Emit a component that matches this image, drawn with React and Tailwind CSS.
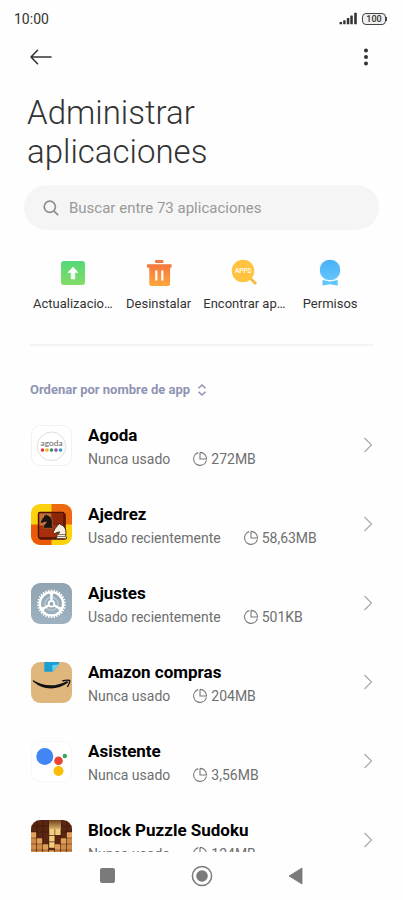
function AgodaIcon() {
  const dots = ['#e4394a', '#f2b134', '#2f9e54', '#9b4fb5', '#2f9fd8']
  return (
    <svg viewBox="0 0 41 41" className="size-full">
      <rect x="0.5" y="0.5" width="40" height="40" rx="8.5" fill="#fff" stroke="#f1f1f1" />
      <circle cx="20.5" cy="21.3" r="14.3" fill="#fff" stroke="#d6d6d6" strokeWidth="0.8" />
      <text x="20.6" y="20.8" textAnchor="middle" fontSize="8.4" fill="#666" fontFamily="Lato, sans-serif">agoda</text>
      {dots.map((color, i) => (
        <circle key={color} cx={11.5 + i * 4.5} cy="25.1" r="1.8" fill={color} />
      ))}
    </svg>
  )
}

const knightPath = 'M3 16h10.500v-1.800l-1-.8c1.200-5.500-.3-10.600-5.300-11.800L6.300 0l-.9 1.900L3.800 1l.2 2.200C2.200 4.500 1.200 6.700.2 8.800c-.3.9.3 1.700 1 1.900.9.2 1.300-.6 2.200-.9 1-.3 2.100-.2 3-.8-.2 2-2.900 2.800-3.100 5.200z'

function ChessIcon() {
  return (
    <svg viewBox="0 0 41 41" className="size-full">
      <defs>
        <clipPath id="chess-clip"><rect width="41" height="41" rx="9" /></clipPath>
      </defs>
      <g clipPath="url(#chess-clip)">
        <rect width="41" height="41" fill="#fbd30c" />
        <rect x="20.5" width="20.5" height="20.5" fill="#ee6a12" />
        <rect y="20.5" width="20.5" height="20.5" fill="#ea5a0b" />
        <rect x="8" y="9" width="27" height="27" rx="2" fill="#501205" opacity="0.75" />
        <rect x="7.5" y="8.5" width="25.5" height="25.5" rx="1.5" fill="#a92f0b" stroke="#4a1205" strokeWidth="1.4" />
        <path d="M8.5 9.5h12v12h-12z" fill="#c9702f" />
        <path d="M20.5 9.5H32v12H20.5z" fill="#8d2608" />
        <path d={knightPath} transform="translate(9.500 9.500) scale(0.920)" fill="#1f130e" stroke="#e0b088" strokeWidth="0.4" />
        <path d={knightPath} transform="translate(22.300 19) scale(0.980)" fill="#f5efe2" stroke="#2e150c" strokeWidth="0.8" />
        <path d="M25.500 32.500h9.500M26.500 30.500h8" stroke="#5b4a40" strokeWidth="0.7" />
      </g>
    </svg>
  )
}

function SettingsIcon() {
  const teeth = Array.from({ length: 30 }, (_, i) => i * 12)
  return (
    <svg viewBox="0 0 41 41" className="size-full">
      <defs>
        <linearGradient id="settings-bg" x1="0" y1="0" x2="0" y2="1">
          <stop offset="0" stopColor="#91a4b1" />
          <stop offset="1" stopColor="#9db1c0" />
        </linearGradient>
      </defs>
      <rect width="41" height="41" rx="9" fill="url(#settings-bg)" />
      <circle cx="20.5" cy="20.8" r="6.5" fill="none" stroke="#b4c2cc" strokeWidth="2" />
      <circle cx="20.5" cy="20.8" r="11.6" fill="none" stroke="#fff" strokeWidth="2.2" />
      {teeth.map((angle) => (
        <path key={angle} d="M20.5 6.5v2.6" stroke="#fff" strokeWidth="1.4" transform={`rotate(${angle} 20.5 20.8)`} />
      ))}
      {[0, 120, 240].map((angle) => (
        <path key={angle} d="M18 9.8h5l-1.3 2.5v5h-2.4v-5z" fill="#fff" transform={`rotate(${angle} 20.5 20.8)`} />
      ))}
      <circle cx="20.5" cy="20.8" r="2.8" fill="#8ea2b1" stroke="#fff" strokeWidth="1.8" />
    </svg>
  )
}

function AmazonIcon() {
  return (
    <svg viewBox="0 0 41 41" className="size-full">
      <rect width="41" height="41" rx="9" fill="#dfb77d" />
      <path d="M13.3 0H28v2.300l-6.300 7.500H13.300z" fill="#1b9fd0" />
      <path d="M21.3 3.2 28 2.3l-6.5 7.5z" fill="#63d2f0" />
      <path d="M1.8 18.1c11 6.6 22.7 7 34.2.8l1.3 1.6c-11.4 8.4-25.5 7.7-35.2-1z" fill="#111" />
      <path d="M31.8 18.7c2.5-.5 5.3-.8 6.8-.2.5 1.8-.8 4.1-2 6" fill="none" stroke="#111" strokeWidth="1.4" strokeLinecap="round" />
    </svg>
  )
}

function AssistantIcon() {
  return (
    <svg viewBox="0 0 41 41" className="size-full">
      <rect x="0.5" y="0.5" width="40" height="40" rx="8.5" fill="#fff" stroke="#f7f7f7" />
      <circle cx="13.8" cy="15.5" r="8.5" fill="#4285f4" />
      <circle cx="27.5" cy="19.7" r="4.3" fill="#e94335" />
      <circle cx="27.5" cy="30" r="5" fill="#fbbc05" />
      <circle cx="33.8" cy="15" r="2.2" fill="#34a853" />
    </svg>
  )
}

function BlockIcon() {
  // first filled row of every column, on a grid of 6px cells
  const columns = [2, 3, 4, 5, 4, 3, 2]
  return (
    <svg viewBox="0 0 41 41" className="size-full">
      <defs>
        <clipPath id="block-clip"><rect width="41" height="41" rx="9" /></clipPath>
        <linearGradient id="block-glow" x1="0" y1="0" x2="0" y2="1">
          <stop offset="0" stopColor="#7a4420" />
          <stop offset="1" stopColor="#f3d67c" />
        </linearGradient>
      </defs>
      <g clipPath="url(#block-clip)">
        <rect width="41" height="41" fill="#582611" />
        <path d="M0 6h41M0 12h41M6 0v41M12 0v41M18 0v41M24 0v41M30 0v41M36 0v41" stroke="#441a0a" strokeWidth="0.8" />
        <path d="M18 0h12v9H18z" fill="url(#block-glow)" opacity="0.8" />
        {columns.map((start, col) =>
          Array.from({ length: 7 - start }, (_, i) => (
            <rect key={`${col}-${i}`} x={col * 6 - 0.2} y={(start + i) * 6 + 0.3} width="5.4" height="5.4" rx="0.5" fill={i === 0 ? '#e0a05a' : '#cf8c49'} />
          ))
        )}
        <path d="M18.2 9h5.4v6h-5.4zM24.2 9h5.4v6h-5.4zM18.2 15.8h5.4v5.8h-5.4zM18.2 22.2h5.4v5.6h-5.4z" fill="#f2ce7c" />
      </g>
    </svg>
  )
}

const shortcuts = [
  {
    label: 'Actualizacio…',
    icon: (
      <svg viewBox="0 0 28 28" className="size-7">
        <defs>
          <linearGradient id="update-bg" x1="0" y1="0" x2="0" y2="1">
            <stop offset="0" stopColor="#55d879" />
            <stop offset="1" stopColor="#83db66" />
          </linearGradient>
        </defs>
        <rect x="2" y="3" width="24" height="24" rx="3" fill="url(#update-bg)" />
        <path d="m14 9 5 5.6h-3.2V21h-3.6v-6.4H9z" fill="#fff" stroke="#fff" strokeWidth="0.6" strokeLinejoin="round" />
      </svg>
    ),
  },
  {
    label: 'Desinstalar',
    icon: (
      <svg viewBox="0 0 28 28" className="size-7">
        <defs>
          <linearGradient id="trash-bg" x1="0" y1="0" x2="0" y2="1">
            <stop offset="0" stopColor="#f3763c" />
            <stop offset="1" stopColor="#ffa63d" />
          </linearGradient>
        </defs>
        <rect x="10" y="2" width="8.5" height="3" rx="1" fill="#ee7843" />
        <path d="M2 6.3h24.6v2.6c0 .5-.3.8-.8.8h-.7V26c0 1.2-.8 2-2 2H6.3c-1.2 0-2-.8-2-2V9.7H2.8c-.5 0-.8-.3-.8-.8z" fill="url(#trash-bg)" />
        <path d="M11.3 12.5v10M17.3 12.5v10" stroke="#fff" strokeWidth="2.2" />
      </svg>
    ),
  },
  {
    label: 'Encontrar ap…',
    icon: (
      <svg viewBox="0 0 28 28" className="size-7">
        <path d="m20 20 6 6" stroke="#f6b93c" strokeWidth="2.8" />
        <circle cx="13" cy="13" r="11.3" fill="#ffc340" />
        <text x="13.2" y="15" textAnchor="middle" fontSize="6.5" fontWeight="500" fill="#fff" fontFamily="Roboto, sans-serif">APPS</text>
      </svg>
    ),
  },
  {
    label: 'Permisos',
    icon: (
      <svg viewBox="0 0 28 28" className="size-7">
        <defs>
          <linearGradient id="permit-bg" x1="0" y1="0" x2="0" y2="1">
            <stop offset="0" stopColor="#48b0f8" />
            <stop offset="1" stopColor="#66c6fb" />
          </linearGradient>
        </defs>
        <path d="M6.5 22 14 23.5 21.7 22v5.5L14 26.3l-7.5 1.2z" fill="#5cc5fa" />
        <circle cx="14" cy="12" r="10.8" fill="url(#permit-bg)" stroke="#fff" strokeWidth="1" />
      </svg>
    ),
  },
]

const apps = [
  { name: 'Agoda', usage: 'Nunca usado', size: '272MB', Icon: AgodaIcon },
  { name: 'Ajedrez', usage: 'Usado recientemente', size: '58,63MB', Icon: ChessIcon },
  { name: 'Ajustes', usage: 'Usado recientemente', size: '501KB', Icon: SettingsIcon },
  { name: 'Amazon compras', usage: 'Nunca usado', size: '204MB', Icon: AmazonIcon },
  { name: 'Asistente', usage: 'Nunca usado', size: '3,56MB', Icon: AssistantIcon },
  { name: 'Block Puzzle Sudoku', usage: 'Nunca usado', size: '124MB', Icon: BlockIcon },
]

function StatusBar() {
  return (
    <div className="flex h-[37px] shrink-0 items-center justify-between pr-4 pl-[14px]">
      <span className="text-sm text-[#333]">10:00</span>
      <div className="flex items-center gap-1">
        <svg viewBox="0 0 19 13" className="h-[13px] w-[19px]" fill="#333" aria-label="Señal">
          <rect x="0.5" y="10" width="2.6" height="2.3" rx="0.5" />
          <rect x="4.2" y="8.2" width="2.4" height="4.1" rx="0.5" />
          <rect x="7.8" y="6" width="2.5" height="6.3" rx="0.5" />
          <rect x="11.3" y="3.5" width="2.5" height="8.8" rx="0.5" />
          <rect x="15.2" y="0.8" width="2.6" height="11.5" rx="0.5" />
        </svg>
        <div className="flex items-center">
          <span className="flex h-3 w-6 items-center justify-center rounded border border-[#444] bg-[#efefef] text-[9px] leading-[10px] font-medium text-[#333]">100</span>
          <span className="h-1 w-px bg-[#444]" />
        </div>
      </div>
    </div>
  )
}

function AppRow({ name, usage, size, Icon }) {
  return (
    <li>
      <button className="flex w-full items-center pt-[15px] pb-4 text-left">
        <span className="mr-4 mb-0.5 ml-px size-[41px] shrink-0"><Icon /></span>
        <span className="min-w-0 flex-1">
          <span className="block truncate text-[17px] leading-[26px] font-bold text-black">{name}</span>
          <span className="flex items-center text-sm leading-[22px] text-[#6f6f6f]">
            <span>{usage}</span>
            <svg viewBox="0 0 16 16" className="mr-[3px] ml-[22px] size-4" fill="none" stroke="#777" strokeWidth="1.1">
              <path d="M6.3 1.6A6.5 6.5 0 1 0 14.4 9.4" />
              <path d="M8 1.4V8h6.6A6.6 6.6 0 0 0 8 1.4" />
            </svg>
            <span>{size}</span>
          </span>
        </span>
        <svg viewBox="0 0 10 16" className="mb-0.5 h-4 w-[10px] shrink-0" fill="none" stroke="#aaa" strokeWidth="1.2">
          <path d="m1.5 1 7 7-7 7" />
        </svg>
      </button>
    </li>
  )
}

export default function App() {
  return (
    <div className="flex h-screen flex-col overflow-hidden bg-[#fefefe] font-['Roboto',sans-serif]">
      <StatusBar />

      <header className="flex h-10 shrink-0 items-center justify-between px-[29px]">
        <button aria-label="Atrás">
          <svg viewBox="0 0 24 16" className="h-4 w-6" fill="none" stroke="#333" strokeWidth="1.6" strokeLinecap="round" strokeLinejoin="round">
            <path d="M22 8H2M8.5 1.3 2 8l6.5 6.7" />
          </svg>
        </button>
        <button aria-label="Más opciones">
          <svg viewBox="0 0 16 18" className="h-[18px] w-4" fill="#333">
            <circle cx="8" cy="2.5" r="2" />
            <circle cx="8" cy="9" r="2" />
            <circle cx="8" cy="15.5" r="2" />
          </svg>
        </button>
      </header>

      <main className="min-h-0 flex-1 overflow-y-auto [scrollbar-width:none]">
        <h1 className="mx-[27px] mt-4 max-w-60 text-[33px] leading-[39px] font-light text-[#333]">Administrar aplicaciones</h1>

        <label className="mx-6 mt-[14px] flex h-[45px] items-center rounded-full bg-[#f5f5f5] pr-6 pl-[19px]">
          <svg viewBox="0 0 16 16" className="mr-[10px] size-4 shrink-0" fill="none" stroke="#8e8e8e" strokeWidth="1.7">
            <circle cx="6.8" cy="6.8" r="5.6" />
            <path d="m10.8 10.8 4.4 4.4" />
          </svg>
          <input type="text" aria-label="Buscar aplicaciones" placeholder="Buscar entre 73 aplicaciones" className="min-w-0 flex-1 bg-transparent text-[15px] leading-5 text-[#333] outline-none placeholder:text-[#999]" />
        </label>

        <div className="mx-[30px] mt-7 grid grid-cols-4">
          {shortcuts.map(({ label, icon }) => (
            <button key={label} className="flex min-w-0 flex-col items-center gap-2">
              {icon}
              <span className="text-center text-[13px] leading-5 whitespace-nowrap text-[#333]">{label}</span>
            </button>
          ))}
        </div>

        <hr className="mx-[30px] mt-[30px] border-t-2 border-[#f3f3f3]" />

        <button className="mx-[30px] mt-[34px] flex h-5 items-center gap-[7px] text-[13px] font-bold text-[#8f94b4]">
          Ordenar por nombre de app
          <svg viewBox="0 0 10 12" className="h-3 w-[10px]" fill="none" stroke="#8f94b4" strokeWidth="1.5">
            <path d="M1.5 4.3 5 1l3.5 3.3M1.5 7.7 5 11l3.5-3.3" />
          </svg>
        </button>

        <ul className="mx-[30px] mt-[7px]">
          {apps.map((app) => (
            <AppRow key={app.name} {...app} />
          ))}
        </ul>
      </main>

      <nav className="flex h-12 shrink-0 items-center justify-center gap-[70px]">
        <button aria-label="Recientes">
          <svg viewBox="0 0 24 24" className="size-6"><rect x="4" y="4" width="15" height="15" rx="2" fill="#7a7a7a" /></svg>
        </button>
        <button aria-label="Inicio">
          <svg viewBox="0 0 24 24" className="size-6">
            <circle cx="12" cy="12" r="9.6" fill="none" stroke="#7a7a7a" strokeWidth="1.5" />
            <circle cx="12" cy="12" r="5.8" fill="#7a7a7a" />
          </svg>
        </button>
        <button aria-label="Volver">
          <svg viewBox="0 0 24 24" className="size-6"><path d="M18 4v16L5 12z" fill="#7a7a7a" stroke="#7a7a7a" strokeWidth="0.8" strokeLinejoin="round" /></svg>
        </button>
      </nav>
    </div>
  )
}
